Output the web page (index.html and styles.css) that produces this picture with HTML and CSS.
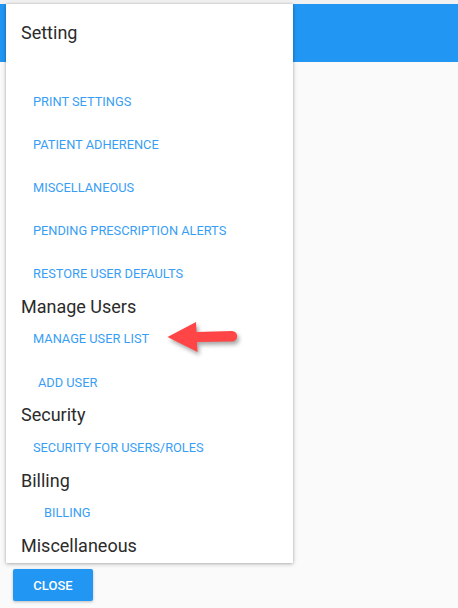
FILE: index.html
```html
<!DOCTYPE html>
<html>
<head>
<meta charset="utf-8">
<link rel="stylesheet" href="styles.css">
</head>
<body>
<div class="strip"></div>
<div class="appbar"></div>
<div class="dialog-wrap">
  <div class="panel">
    <h2 class="heading first">Setting</h2>
    <a class="link l-first">PRINT SETTINGS</a>
    <a class="link l-list">PATIENT ADHERENCE</a>
    <a class="link l-list">MISCELLANEOUS</a>
    <a class="link l-list">PENDING PRESCRIPTION ALERTS</a>
    <a class="link l-list">RESTORE USER DEFAULTS</a>
    <h2 class="heading h-manage">Manage Users</h2>
    <a class="link l-manage">MANAGE USER LIST</a>
    <a class="link l-add">ADD USER</a>
    <h2 class="heading h-security">Security</h2>
    <a class="link l-security">SECURITY FOR USERS/ROLES</a>
    <h2 class="heading h-billing">Billing</h2>
    <a class="link l-billing">BILLING</a>
    <h2 class="heading h-misc">Miscellaneous</h2>
    <svg class="arrow" width="80" height="48" viewBox="0 0 80 48">
      <path d="M8.5 27 L37 12 L37.5 22 L73 21 A5.2 5.2 0 0 1 73 31.4 L38 32 L38.5 42 Z" fill="#ff4545"/>
    </svg>
  </div>
  <div class="actions">
    <button class="close">CLOSE</button>
  </div>
</div>
</body>
</html>
```
FILE: styles.css
```css
html, body {
  margin: 0;
  padding: 0;
}
body {
  background: #fafafa;
  font-family: Roboto, "Liberation Sans", sans-serif;
  width: 458px;
  height: 608px;
  position: relative;
  overflow: hidden;
}
.strip {
  height: 4px;
  background: #f1f1f1;
}
.appbar {
  height: 58px;
  background: #2196f3;
}
.dialog-wrap {
  position: absolute;
  left: 6px;
  top: 4px;
  width: 287px;
  display: flex;
  flex-direction: column;
}
.panel {
  position: relative;
  background: #fff;
  box-shadow: 0 1px 4px rgba(0,0,0,0.28), 0 0 2px rgba(0,0,0,0.12);
  padding: 0 0 5px 15px;
  display: flex;
  flex-direction: column;
  align-items: flex-start;
}
.heading {
  margin: 0;
  font-size: 18px;
  font-weight: 400;
  line-height: 24px;
  color: #2b2b2b;
}
.first { margin-top: 17px; }
.h-manage { margin-top: 11px; }
.h-security { margin-top: 10px; }
.h-billing { margin-top: 11px; }
.h-misc { margin-top: 11px; }
.link {
  display: block;
  font-size: 12.8px;
  line-height: 20px;
  color: #389ef4;
  text-decoration: none;
  margin-left: 12px;
}
.l-first { margin-top: 47px; }
.l-list { margin-top: 23px; }
.l-manage { margin-top: 10px; }
.l-add { margin-top: 24px; margin-left: 17px; }
.l-security { margin-top: 11px; }
.l-billing { margin-top: 10px; margin-left: 23px; }
.arrow {
  position: absolute;
  left: 153px;
  top: 306px;
  filter: drop-shadow(2px 3px 2px rgba(0,0,0,0.35));
}
.actions {
  padding: 6px 0 0 7px;
  display: flex;
}
.close {
  width: 80px;
  height: 32px;
  border: none;
  border-radius: 2px;
  background: #2196f3;
  color: #fff;
  font-family: Roboto, "Liberation Sans", sans-serif;
  font-size: 13px;
  font-weight: 500;
  padding: 0;
  box-shadow: 0 1px 3px rgba(0,0,0,0.25);
}
```
